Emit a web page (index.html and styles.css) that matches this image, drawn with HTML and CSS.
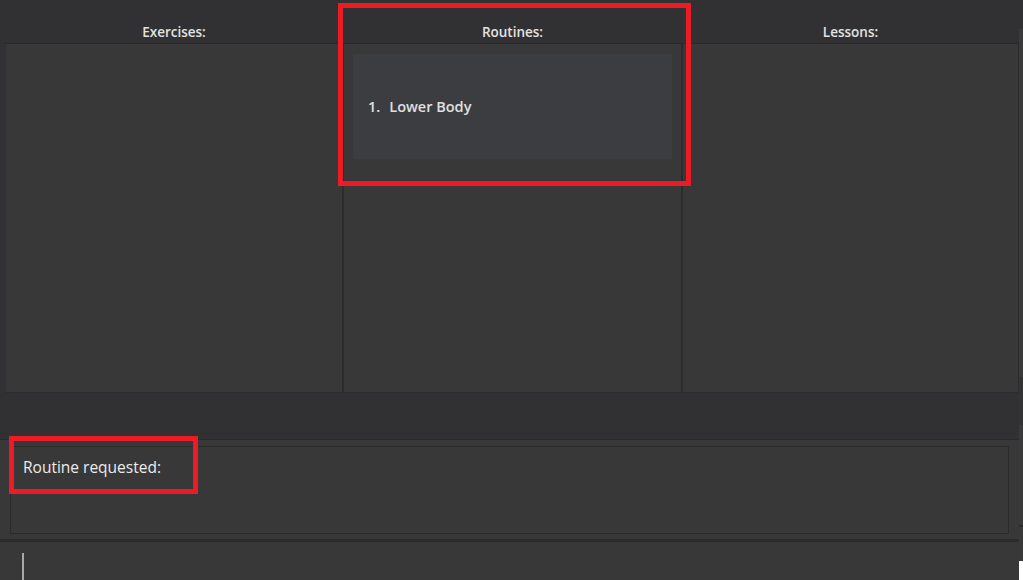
FILE: index.html
```html
<!DOCTYPE html>
<html>
<head>
<meta charset="utf-8">
<link rel="stylesheet" href="styles.css">
</head>
<body>
<div class="app">
  <div class="main">
    <div class="lists">
      <div class="col col-ex">
        <div class="col-title">Exercises:</div>
        <div class="panel"></div>
      </div>
      <div class="col col-rt">
        <div class="col-title">Routines:</div>
        <div class="panel">
          <div class="card"><span class="idx">1.</span><span class="name">Lower Body</span></div>
        </div>
      </div>
      <div class="col col-ls">
        <div class="col-title">Lessons:</div>
        <div class="panel"></div>
      </div>
    </div>
    <div class="gap"></div>
    <div class="result">
      <div class="result-box">Routine requested:</div>
    </div>
    <div class="command">
      <span class="caret"></span>
    </div>
  </div>
  <div class="strip">
    <div class="s1"></div>
    <div class="s2"></div>
    <div class="s3"></div>
    <div class="s4"></div>
    <div class="s5"></div>
    <div class="s6"></div>
    <div class="s7"></div>
  </div>
  <div class="mark mark-routines"></div>
  <div class="mark mark-result"></div>
</div>
</body>
</html>
```
FILE: styles.css
```css
*, *::before, *::after {
  box-sizing: border-box;
}
html, body {
  margin: 0;
  padding: 0;
  background: #313133;
}
body {
  width: 1023px;
  height: 580px;
  overflow: hidden;
  font-family: "Open Sans", "Noto Sans", sans-serif;
  color: #e4e4e4;
}
.app {
  position: relative;
  display: flex;
  width: 1023px;
  height: 580px;
}
.main {
  width: 1019px;
  display: flex;
  flex-direction: column;
}
.lists {
  display: flex;
  flex-shrink: 0;
  height: 393px;
  padding-left: 5px;
  background: #313133;
}
.col {
  display: flex;
  flex-direction: column;
}
.col-ex { width: 338px; }
.col-rt { width: 339px; }
.col-ls { width: 337px; }
.col-title {
  height: 44px;
  padding-top: 22px;
  text-align: center;
  font-size: 13.5px;
  font-weight: 600;
  line-height: 20px;
  color: #e2e2e2;
  border-bottom: 1px solid #2a2a2a;
}
.panel {
  flex: 1;
  background: #383838;
  border-left: 1px solid #2c2c2c;
  border-right: 1px solid #2c2c2c;
  border-bottom: 1px solid #2c2c2c;
  padding: 10px 9px;
}
.col-ex .panel { border-left-color: #303030; }
.card {
  height: 105px;
  background: #3c3d40;
  display: flex;
  align-items: center;
  padding-left: 15px;
  font-size: 14.5px;
  font-weight: 600;
  color: #e0e0e0;
}
.card .idx { margin-right: 9px; }
.gap {
  flex-shrink: 0;
  height: 47px;
  background: #313133;
  border-bottom: 1px solid #2a2a2a;
}
.result {
  flex-shrink: 0;
  background: #383838;
  padding: 6px 10px 5px 10px;
}
.result-box {
  height: 88px;
  border: 1px solid #2b2b2b;
  padding: 9px 12px;
  font-size: 15.5px;
  line-height: 22px;
  font-weight: 400;
  color: #ececec;
}
.command {
  flex: 1;
  background: #383838;
  border-top: 3px solid #2b2b2b;
  padding: 11px 0 0 22px;
}
.caret {
  display: block;
  width: 2px;
  height: 27px;
  background: #a8a8a8;
}
.strip {
  width: 4px;
  display: flex;
  flex-direction: column;
}
.s1 { height: 29px; background: #313133; }
.s2 { height: 348px; background: #3a3a3a; }
.s3 { height: 48px; background: #333335; }
.s4 { height: 100px; background: #3a3a3a; }
.s5 { height: 2px; background: #2a2a2a; }
.s6 { height: 34px; background: #393939; }
.s7 { flex: 1; background: #ffffff; }
.mark {
  position: absolute;
  border: 5px solid #ed1c24;
}
.mark-routines {
  left: 338px;
  top: 3px;
  width: 353px;
  height: 183px;
}
.mark-result {
  left: 9px;
  top: 436px;
  width: 189px;
  height: 58px;
}
```
